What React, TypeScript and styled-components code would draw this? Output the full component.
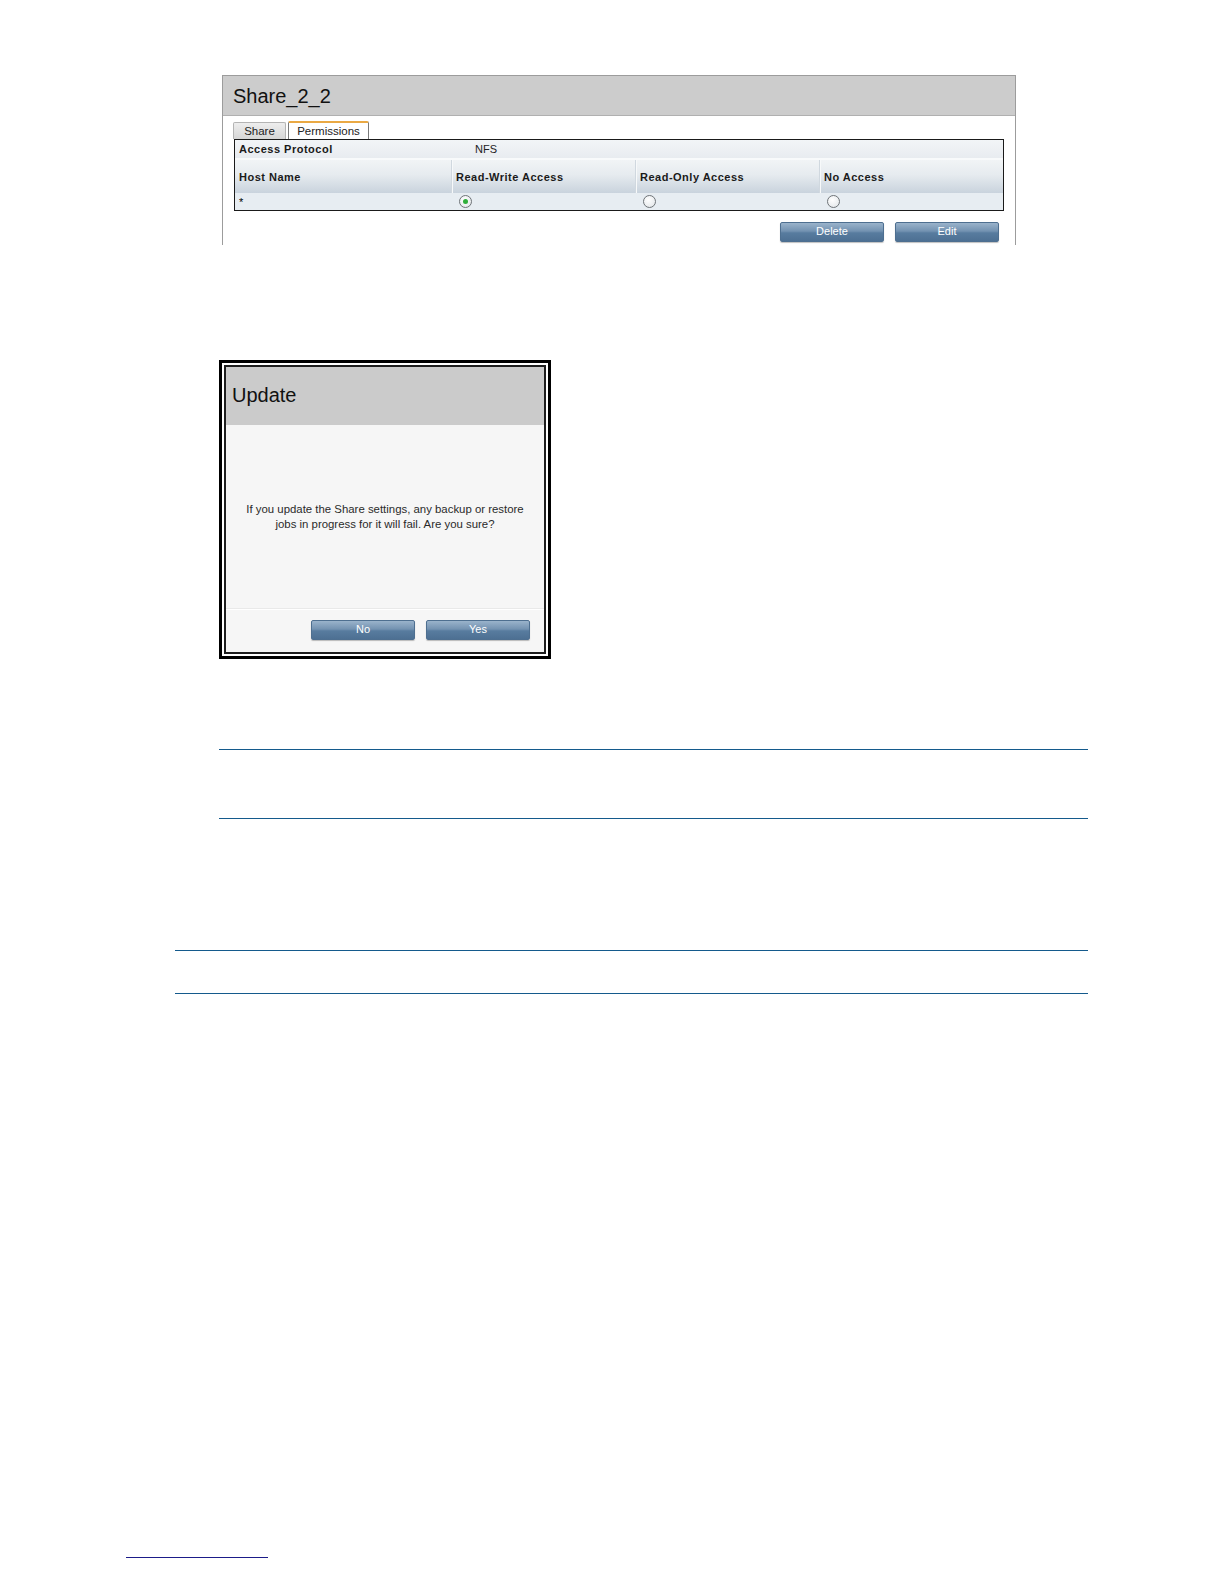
import * as React from "react";
import styled, { createGlobalStyle } from "styled-components";

const GlobalStyle = createGlobalStyle`
  html, body {
    margin: 0;
    padding: 0;
    background: #ffffff;
    font-family: "Liberation Sans", Arial, sans-serif;
  }
`;

const Page = styled.div`
  padding-top: 75px;
  display: flex;
  flex-direction: column;
  align-items: flex-start;
`;

const Panel = styled.div`
  margin-left: 222px;
  width: 794px;
  height: 170px;
  border: 1px solid #9c9c9c;
  border-bottom: none;
  box-sizing: border-box;
  background: #ffffff;
`;

const PanelHeader = styled.div`
  height: 39px;
  background: #cccccc;
  border-bottom: 1px solid #b0b0b0;
  padding-left: 10px;
  font-size: 20px;
  line-height: 41px;
  color: #111;
`;

const TabRow = styled.div`
  display: flex;
  align-items: flex-end;
  gap: 2px;
  margin: 5px 0 0 10px;
  height: 18px;
`;

const Tab = styled.div<{ $active?: boolean }>`
  box-sizing: border-box;
  width: ${(p) => (p.$active ? "81px" : "53px")};
  height: ${(p) => (p.$active ? "18px" : "17px")};
  border: 1px solid ${(p) => (p.$active ? "#7a7a7a" : "#b4b4b4")};
  border-bottom: none;
  border-top: ${(p) => (p.$active ? "2px solid #eaa944" : "1px solid #b4b4b4")};
  border-radius: 2px 2px 0 0;
  background: ${(p) =>
    p.$active ? "#ffffff" : "linear-gradient(#eeeeee, #d6d6d6)"};
  font-size: 11.5px;
  line-height: 16px;
  text-align: center;
  color: #222;
`;

const Table = styled.div`
  margin-left: 11px;
  width: 770px;
  border: 1px solid #1a1a1a;
  box-sizing: border-box;
  background: #ffffff;
`;

const ProtocolRow = styled.div`
  display: flex;
  height: 18px;
  align-items: center;
  background: linear-gradient(#f2f5f7, #e8ecf0);
  border-bottom: 2px solid #f8fafb;
  font-size: 11px;
`;

const Label = styled.div<{ $w?: string }>`
  width: ${(p) => p.$w || "auto"};
  padding-left: 4px;
  font-weight: bold;
  letter-spacing: 0.5px;
  color: #1a1a1a;
  box-sizing: border-box;
`;

const Value = styled.div`
  color: #222;
`;

const HeadRow = styled.div`
  display: grid;
  grid-template-columns: 216px 184px 184px 1fr;
  height: 33px;
  background: linear-gradient(#f1f4f6 0%, #e6ebef 45%, #c9d3dd 100%);
`;

const HeadCell = styled.div<{ $sep?: boolean }>`
  display: flex;
  align-items: flex-end;
  padding: 0 0 10px 4px;
  font-size: 11px;
  font-weight: bold;
  letter-spacing: 0.5px;
  color: #1a1a1a;
  border-left: ${(p) => (p.$sep ? "1px solid #d0d8df" : "none")};
  box-shadow: ${(p) => (p.$sep ? "inset 1px 0 0 #f7f9fa" : "none")};
`;

const DataRow = styled.div`
  display: grid;
  grid-template-columns: 216px 184px 184px 1fr;
  height: 17px;
  align-items: center;
  background: #e7edf2;
  font-size: 11px;
`;

const DataCell = styled.div`
  padding-left: 4px;
  display: flex;
  align-items: center;
`;

const Radio = styled.span<{ $checked?: boolean }>`
  display: inline-block;
  box-sizing: border-box;
  width: 13px;
  height: 13px;
  margin-left: 4px;
  border-radius: 50%;
  border: 1px solid #6f7478;
  background: radial-gradient(circle at 40% 35%, #ffffff, #dfe3e6);
  position: relative;

  &::after {
    content: "";
    display: ${(p) => (p.$checked ? "block" : "none")};
    position: absolute;
    width: 5px;
    height: 5px;
    border-radius: 50%;
    background: #2fae3a;
    left: 3px;
    top: 3px;
  }
`;

const ActionBar = styled.div<{ $pad: string }>`
  display: flex;
  justify-content: flex-end;
  gap: 11px;
  padding: ${(p) => p.$pad};
`;

const Button = styled.button`
  width: 104px;
  height: 20px;
  padding: 0 0 2px;
  border: 1px solid #4e6f90;
  border-radius: 2px;
  background: linear-gradient(#9ab3cb 0%, #7392b1 45%, #587c9f 55%, #4d7093 100%);
  box-shadow: 0 1px 1px rgba(0, 0, 0, 0.25);
  color: #ffffff;
  font-family: "Liberation Sans", Arial, sans-serif;
  font-size: 11px;
  line-height: 16px;
  cursor: pointer;
`;

const DialogFrame = styled.div`
  margin: 115px 0 0 219px;
  width: 332px;
  height: 299px;
  border: 3px solid #000000;
  padding: 2px;
  box-sizing: border-box;
  background: #ffffff;
`;

const DialogInner = styled.div`
  height: 100%;
  border: 2px solid #1e1e1e;
  box-sizing: border-box;
  display: flex;
  flex-direction: column;
  background: #f6f6f6;
`;

const DialogHeader = styled.div`
  height: 58px;
  flex: none;
  background: #cbcbcb;
  padding-left: 6px;
  font-size: 20px;
  line-height: 56px;
  color: #111;
`;

const DialogBody = styled.div`
  height: 183px;
  flex: none;
  display: flex;
  align-items: center;
  justify-content: center;
  text-align: center;
  font-size: 11.4px;
  line-height: 15px;
  color: #2a2a2a;
  border-bottom: 1px solid #e9e9e9;
  box-shadow: 0 1px 0 #ffffff;
`;

const Rules = styled.div<{ $top: number; $left: number; $h: number }>`
  margin: ${(p) => p.$top}px 0 0 ${(p) => p.$left}px;
  width: ${(p) => 1088 - p.$left}px;
  height: ${(p) => p.$h}px;
  border-top: 1px solid #145a8c;
  border-bottom: 1px solid #145a8c;
`;

const FootLine = styled.div`
  margin: 563px 0 0 126px;
  width: 142px;
  height: 0;
  border-top: 1px solid #1b1b88;
`;

const columns = ["Host Name", "Read-Write Access", "Read-Only Access", "No Access"];

export default function App() {
  return (
    <Page>
      <GlobalStyle />
      <Panel>
        <PanelHeader>Share_2_2</PanelHeader>
        <TabRow>
          <Tab>Share</Tab>
          <Tab $active>Permissions</Tab>
        </TabRow>
        <Table>
          <ProtocolRow>
            <Label $w="240px">Access Protocol</Label>
            <Value>NFS</Value>
          </ProtocolRow>
          <HeadRow>
            {columns.map((c, i) => (
              <HeadCell key={c} $sep={i > 0}>
                {c}
              </HeadCell>
            ))}
          </HeadRow>
          <DataRow>
            <DataCell>*</DataCell>
            <DataCell>
              <Radio $checked />
            </DataCell>
            <DataCell>
              <Radio />
            </DataCell>
            <DataCell>
              <Radio />
            </DataCell>
          </DataRow>
        </Table>
        <ActionBar $pad="11px 16px 0 0">
          <Button>Delete</Button>
          <Button>Edit</Button>
        </ActionBar>
      </Panel>

      <DialogFrame>
        <DialogInner>
          <DialogHeader>Update</DialogHeader>
          <DialogBody>
            If you update the Share settings, any backup or restore
            <br />
            jobs in progress for it will fail. Are you sure?
          </DialogBody>
          <ActionBar $pad="11px 14px 0 0">
            <Button>No</Button>
            <Button>Yes</Button>
          </ActionBar>
        </DialogInner>
      </DialogFrame>

      <Rules $top={90} $left={219} $h={68} />
      <Rules $top={131} $left={175} $h={42} />
      <FootLine />
    </Page>
  );
}
